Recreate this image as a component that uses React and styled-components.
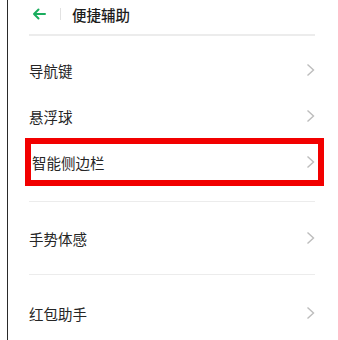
import React from "react"
import styled, { createGlobalStyle } from "styled-components"

const GlobalStyle = createGlobalStyle`
  html, body {
    margin: 0;
    padding: 0;
    background: #ffffff;
  }
  body {
    font-family: "Noto Sans CJK SC", "Noto Sans", sans-serif;
    color: #222;
  }
`

const items = [
  { section: 1, label: "导航键" },
  { section: 1, label: "悬浮球" },
  { section: 1, label: "智能侧边栏", marked: true },
  { section: 2, label: "手势体感" },
  { section: 3, label: "红包助手" },
]

const Chevron = () => (
  <svg width="9" height="14" viewBox="0 0 9 14">
    <path d="M1.5 1.5 L7.5 7 L1.5 12.5" fill="none" stroke="#bdbdbd" strokeWidth="1.4" />
  </svg>
)

const BackArrow = () => (
  <svg width="14" height="12" viewBox="0 0 14 12">
    <path d="M13 6 H2 M6.5 1.5 L2 6 L6.5 10.5" fill="none" stroke="#1aad5e" strokeWidth="2" strokeLinecap="round" strokeLinejoin="round" />
  </svg>
)

const App = () => {
  return (
    <>
      <GlobalStyle />
      <Page>
        <Header>
          <BackButton>
            <BackArrow />
          </BackButton>
          <HeaderDivider />
          <Title>便捷辅助</Title>
        </Header>

        <Section pt={11} pb={16}>
          {items
            .filter((i) => i.section === 1)
            .map((i) => (
              <Row key={i.label} h={46} marked={i.marked}>
                {i.marked && <Highlight />}
                <Label>{i.label}</Label>
                <Chevron />
              </Row>
            ))}
        </Section>

        <Section>
          <Row h={72}>
            <Label>手势体感</Label>
            <Chevron />
          </Row>
        </Section>

        <Section last>
          <Row h={76}>
            <Label>红包助手</Label>
            <Chevron />
          </Row>
        </Section>
      </Page>
    </>
  )
}

export default App

const Page = styled.div`
  margin-left: 7px;
  border-left: 1px solid #2a2a2a;
  min-height: 340px;
  padding: 0 23px 0 21px;
  box-sizing: border-box;
  overflow: hidden;
`

const Header = styled.div`
  display: flex;
  align-items: center;
  height: 28px;
  padding-bottom: 6px;
  border-bottom: 2px solid #ececec;
`

const BackButton = styled.div`
  display: flex;
  align-items: center;
  margin-left: 3px;
  width: 14px;
`

const HeaderDivider = styled.div`
  width: 1px;
  height: 12px;
  background: #e2e2e2;
  margin: 0 11px 0 14px;
`

const Title = styled.div`
  font-size: 14.5px;
  font-weight: 500;
  color: #1c1c1c;
`

const Section = styled.div`
  padding-top: ${(p) => p.pt || 0}px;
  padding-bottom: ${(p) => p.pb || 0}px;
  border-bottom: ${(p) => (p.last ? "none" : "1px solid #ececec")};
`

const Row = styled.div`
  position: relative;
  display: flex;
  align-items: center;
  justify-content: space-between;
  height: ${(p) => p.h}px;
  padding-left: ${(p) => (p.marked ? 3 : 0)}px;
`

const Label = styled.span`
  font-size: 14.5px;
  color: #262626;
  position: relative;
`

const Highlight = styled.div`
  position: absolute;
  left: -4px;
  right: -9px;
  top: -1px;
  bottom: -1px;
  border: 6px solid #f20000;
  pointer-events: none;
`
